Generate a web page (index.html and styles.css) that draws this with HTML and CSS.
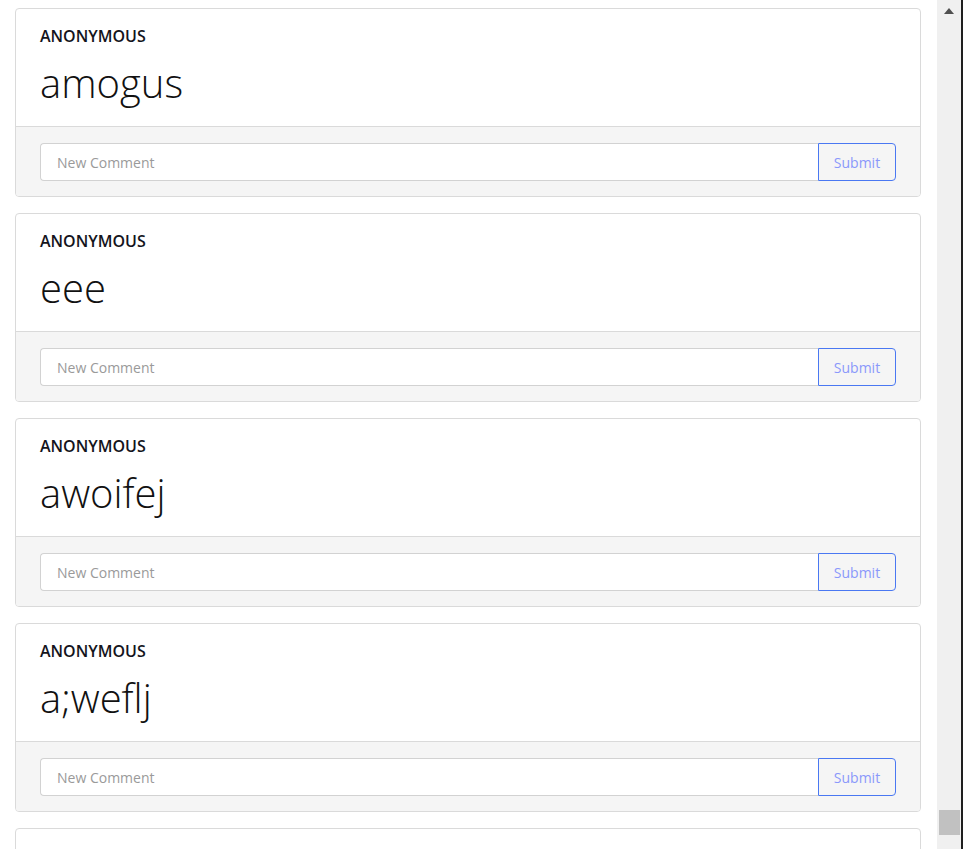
FILE: index.html
```html
<!DOCTYPE html>
<html>
<head>
<meta charset="utf-8">
<link rel="stylesheet" href="styles.css">
</head>
<body>
<div class="page">
  <main class="feed">
    <div class="card">
      <div class="card-body">
        <h6 class="author">ANONYMOUS</h6>
        <h1 class="post">amogus</h1>
      </div>
      <div class="card-footer">
        <div class="input-group">
          <input class="comment" type="text" placeholder="New Comment">
          <button class="submit">Submit</button>
        </div>
      </div>
    </div>
    <div class="card">
      <div class="card-body">
        <h6 class="author">ANONYMOUS</h6>
        <h1 class="post">eee</h1>
      </div>
      <div class="card-footer">
        <div class="input-group">
          <input class="comment" type="text" placeholder="New Comment">
          <button class="submit">Submit</button>
        </div>
      </div>
    </div>
    <div class="card">
      <div class="card-body">
        <h6 class="author">ANONYMOUS</h6>
        <h1 class="post">awoifej</h1>
      </div>
      <div class="card-footer">
        <div class="input-group">
          <input class="comment" type="text" placeholder="New Comment">
          <button class="submit">Submit</button>
        </div>
      </div>
    </div>
    <div class="card">
      <div class="card-body">
        <h6 class="author">ANONYMOUS</h6>
        <h1 class="post">a;weflj</h1>
      </div>
      <div class="card-footer">
        <div class="input-group">
          <input class="comment" type="text" placeholder="New Comment">
          <button class="submit">Submit</button>
        </div>
      </div>
    </div>
    <div class="card card-last"></div>
  </main>
  <aside class="scrollbar">
    <div class="arrow-up"></div>
    <div class="thumb"></div>
  </aside>
  <div class="edge"></div>
</div>
</body>
</html>
```

FILE: styles.css
```css
html, body {
  margin: 0;
  padding: 0;
  height: 849px;
  overflow: hidden;
  background: #fff;
}

body {
  font-family: "Open Sans", "Liberation Sans", sans-serif;
  color: #212529;
}

.page {
  display: flex;
  height: 849px;
}

.feed {
  flex: 1;
  padding: 8px 16px 0 15px;
  overflow: hidden;
}

.card {
  border: 1px solid #dadada;
  border-radius: 4px;
  margin-bottom: 16px;
  overflow: hidden;
  background: #fff;
}

.card-last {
  height: 60px;
}

.card-body {
  box-sizing: border-box;
  padding: 18px 24px 0;
  height: 117px;
}

.author {
  margin: 0 0 13px;
  font-size: 16px;
  font-weight: 600;
  line-height: 19px;
  color: #14141c;
}

.post {
  margin: 0;
  font-size: 40px;
  font-weight: 300;
  line-height: 48px;
  color: #111;
}

.card-footer {
  border-top: 1px solid #dadada;
  background: #f5f5f5;
  padding: 16px 24px 15px;
}

.input-group {
  display: flex;
  height: 38px;
}

.comment {
  flex: 1;
  min-width: 0;
  box-sizing: border-box;
  height: 38px;
  border: 1px solid #d2d2d2;
  border-right: none;
  border-radius: 4px 0 0 4px;
  background: #fff;
  padding: 0 16px;
  font-family: "Open Sans", "Liberation Sans", sans-serif;
  font-size: 14px;
  color: #333;
  outline: none;
}

.comment::placeholder {
  color: #9a9a9a;
}

.submit {
  box-sizing: border-box;
  width: 78px;
  height: 38px;
  border: 1px solid #4a78f2;
  border-radius: 0 4px 4px 0;
  background: transparent;
  color: #8a98fb;
  font-family: "Open Sans", "Liberation Sans", sans-serif;
  font-size: 14px;
  padding: 0;
}

.scrollbar {
  width: 24px;
  background: #f0f0f0;
  display: flex;
  flex-direction: column;
  align-items: center;
}

.arrow-up {
  margin-top: 8px;
  width: 0;
  height: 0;
  border-left: 5px solid transparent;
  border-right: 5px solid transparent;
  border-bottom: 6px solid #505050;
}

.thumb {
  margin-top: auto;
  margin-bottom: 14px;
  width: 21px;
  height: 25px;
  background: #c1c1c1;
}

.edge {
  width: 2px;
  background: #1f1f1f;
}
```
